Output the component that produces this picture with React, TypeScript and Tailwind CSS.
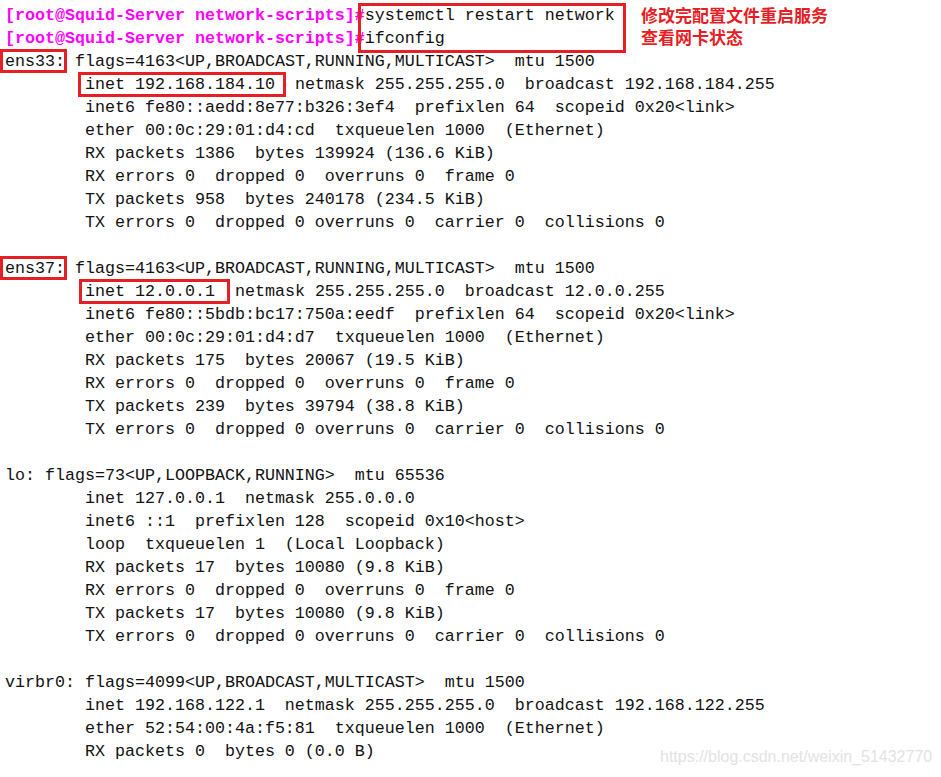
import React from "react"

const mono = { fontFamily: '"Liberation Mono", "DejaVu Sans Mono", monospace' }

const prompt = "[root@Squid-Server network-scripts]#"

type Line = { text?: string; box?: string; rest?: string; lead?: string }

// ifconfig output, rows after the two commands
const output: Line[] = [
  { lead: "", box: "ens33:", rest: " flags=4163<UP,BROADCAST,RUNNING,MULTICAST>  mtu 1500" },
  { lead: "        ", box: "inet 192.168.184.10", rest: "  netmask 255.255.255.0  broadcast 192.168.184.255" },
  { text: "        inet6 fe80::aedd:8e77:b326:3ef4  prefixlen 64  scopeid 0x20<link>" },
  { text: "        ether 00:0c:29:01:d4:cd  txqueuelen 1000  (Ethernet)" },
  { text: "        RX packets 1386  bytes 139924 (136.6 KiB)" },
  { text: "        RX errors 0  dropped 0  overruns 0  frame 0" },
  { text: "        TX packets 958  bytes 240178 (234.5 KiB)" },
  { text: "        TX errors 0  dropped 0 overruns 0  carrier 0  collisions 0" },
  { text: "" },
  { lead: "", box: "ens37:", rest: " flags=4163<UP,BROADCAST,RUNNING,MULTICAST>  mtu 1500" },
  { lead: "        ", box: "inet 12.0.0.1", rest: "  netmask 255.255.255.0  broadcast 12.0.0.255" },
  { text: "        inet6 fe80::5bdb:bc17:750a:eedf  prefixlen 64  scopeid 0x20<link>" },
  { text: "        ether 00:0c:29:01:d4:d7  txqueuelen 1000  (Ethernet)" },
  { text: "        RX packets 175  bytes 20067 (19.5 KiB)" },
  { text: "        RX errors 0  dropped 0  overruns 0  frame 0" },
  { text: "        TX packets 239  bytes 39794 (38.8 KiB)" },
  { text: "        TX errors 0  dropped 0 overruns 0  carrier 0  collisions 0" },
  { text: "" },
  { text: "lo: flags=73<UP,LOOPBACK,RUNNING>  mtu 65536" },
  { text: "        inet 127.0.0.1  netmask 255.0.0.0" },
  { text: "        inet6 ::1  prefixlen 128  scopeid 0x10<host>" },
  { text: "        loop  txqueuelen 1  (Local Loopback)" },
  { text: "        RX packets 17  bytes 10080 (9.8 KiB)" },
  { text: "        RX errors 0  dropped 0  overruns 0  frame 0" },
  { text: "        TX packets 17  bytes 10080 (9.8 KiB)" },
  { text: "        TX errors 0  dropped 0 overruns 0  carrier 0  collisions 0" },
  { text: "" },
  { text: "virbr0: flags=4099<UP,BROADCAST,MULTICAST>  mtu 1500" },
  { text: "        inet 192.168.122.1  netmask 255.255.255.0  broadcast 192.168.122.255" },
  { text: "        ether 52:54:00:4a:f5:81  txqueuelen 1000  (Ethernet)" },
  { text: "        RX packets 0  bytes 0 (0.0 B)" },
]

const boxClass: Record<string, string> = {
  "ens33:": "absolute left-[-5px] top-[-1px] w-[67px] h-[24px]",
  "ens37:": "absolute left-[-5px] top-[-1px] w-[67px] h-[24px]",
  "inet 192.168.184.10": "absolute left-[-7px] top-[-1px] w-[208px] h-[25px]",
  "inet 12.0.0.1": "absolute left-[-6px] top-[-1px] w-[151px] h-[25px]",
}

function Row({ line }: { line: Line }) {
  if (line.box === undefined) {
    return <div className="h-[23px] leading-[23px] whitespace-pre">{line.text}</div>
  }
  return (
    <div className="h-[23px] leading-[23px] whitespace-pre">
      {line.lead}
      <span className="relative inline-block h-[23px] align-top">
        {line.box}
        <span className={`${boxClass[line.box]} border-[3px] border-[#e61e25]`} />
      </span>
      {line.rest}
    </div>
  )
}

export default function App() {
  return (
    <div className="relative w-[941px] h-[777px] overflow-hidden bg-white">
      <div className="mt-[-19px] pl-[5px] text-[16.666px] text-[#111]" style={mono}>
        <div className="h-[23px] leading-[23px] whitespace-pre font-bold text-[#ff00ff]">{prompt}</div>
        <div className="h-[23px] leading-[23px] whitespace-pre">
          <span className="font-bold text-[#ff00ff]">{prompt}</span>
          <span className="relative inline-block h-[23px] align-top">
            systemctl restart network
            <span className="absolute left-[-7px] top-[-1px] w-[268px] h-[50px] border-[3px] border-[#e61e25]" />
          </span>
        </div>
        <div className="h-[23px] leading-[23px] whitespace-pre">
          <span className="font-bold text-[#ff00ff]">{prompt}</span>ifconfig
        </div>
        {output.map((line, i) => (
          <Row key={i} line={line} />
        ))}
      </div>

      {/* annotation */}
      <div
        className="absolute left-[641px] top-[4px] flex flex-col text-[17px] leading-[22px] font-bold text-[#e61e25]"
        style={{ fontFamily: '"Noto Sans CJK SC", "Noto Sans", sans-serif' }}
      >
        <span className="h-[22px]">修改完配置文件重启服务</span>
        <span className="h-[22px]">查看网卡状态</span>
      </div>

      {/* watermark */}
      <div
        className="absolute left-[660px] top-[748px] text-[16px] leading-[18px] text-[#e3e3e3]"
        style={{ fontFamily: '"Liberation Sans", Arial, sans-serif' }}
      >
        https://blog.csdn.net/weixin_51432770
      </div>
    </div>
  )
}
